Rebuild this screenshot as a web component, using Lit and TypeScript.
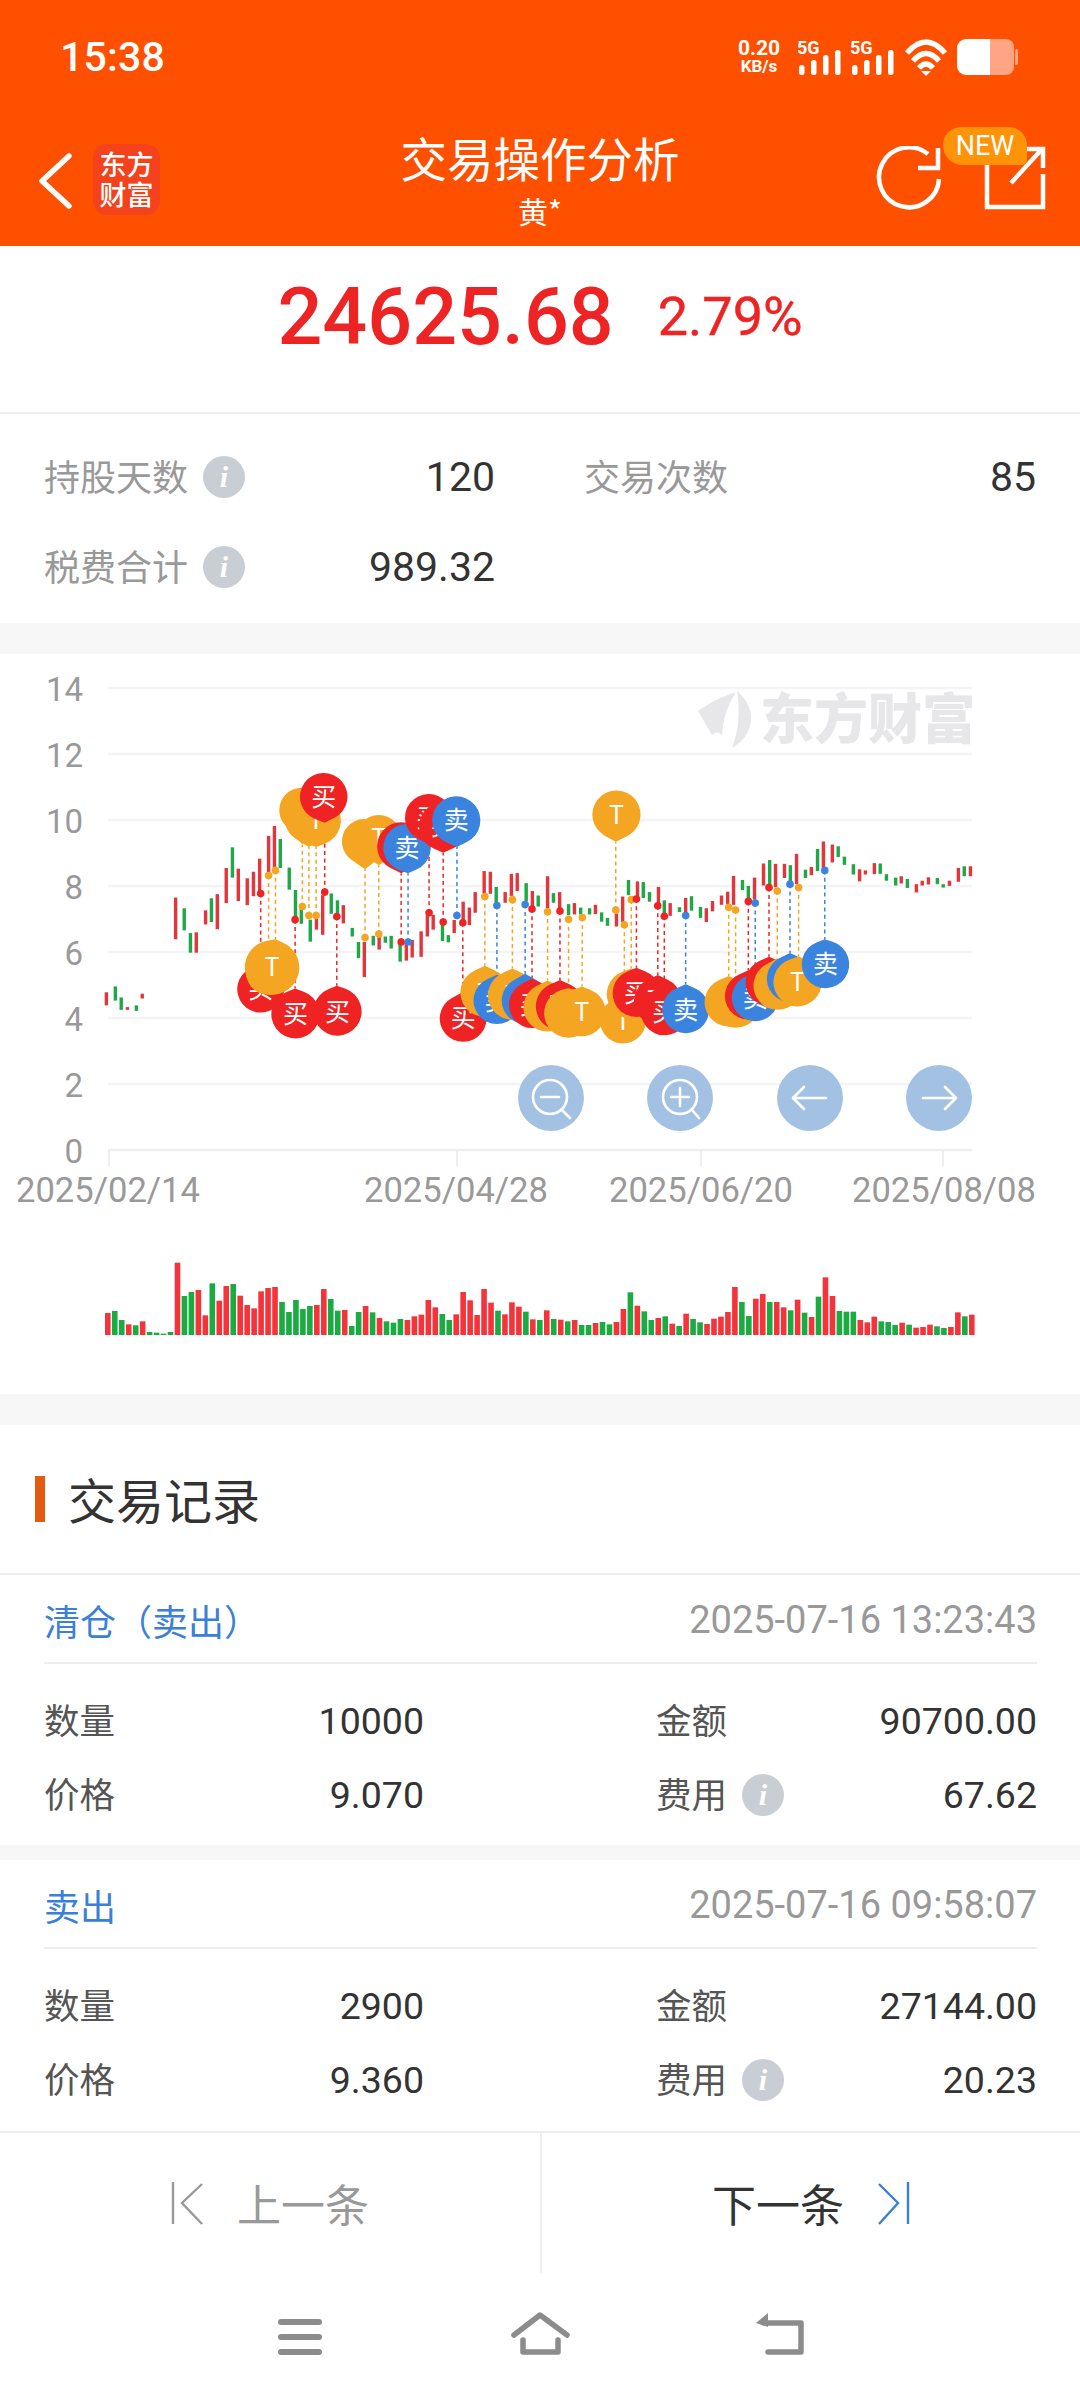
import { LitElement, html, css, svg } from "lit";
import { customElement } from "lit/decorators.js";

const SX = 2.904;
const lx = (z: number) => z / SX;
const rx = (z: number) => 540 + z / SX;
const zy = (z: number) => 650 + z / SX;

const leftC = "r 309 994 1032,g 335 977 1018,g 352 1009 1045,r 370 1037 1045,g 396 1032 1048,r 413 998 1012,r 510 719 840,g 535 750 814,g 553 822 879,r 570 820 879,r 597 756 797,g 614 721 790,r 631 709 811,r 657 633 735,g 675 573 661,r 692 635 729,r 718 663 741,r 736 644 715,r 754 606 707,r 780 540 645,r 797 511 633,g 814 549 633,g 840 632 696,g 858 697 783,g 875 745 795,g 901 783 847,r 919 770 812,r 937 712 827,g 962 707 766,g 980 727 770,r 997 741 794,g 1023 807 832,g 1041 848 895,r 1058 848 950,g 1084 830 858,r 1101 830 870,g 1119 832 850,g 1136 830 867,g 1162 855 905,r 1180 850 902,r 1197 842 893,r 1223 817 891,r 1241 770 832,r 1258 769 812,g 1285 795 845,g 1302 828 849,r 1319 784 822,r 1345 731 790,r 1363 748 799,r 1380 703 763,r 1406 642 707,r 1424 644 708,g 1441 688 732,r 1467 703 734,r 1485 650 714,r 1502 648 700,g 1528 677 730,r 1546 700 745,g 1563 713 745";
const rightC = "r 22 657 750,g 39 706 734,r 57 703 750,g 83 738 770,r 100 735 768,g 118 748 768,g 144 750 768,r 161 740 767,g 179 762 789,g 196 778 801,r 222 765 803,r 240 716 790,g 257 668 712,r 283 672 715,g 300 674 720,g 318 703 731,r 344 688 735,g 361 727 765,r 378 735 772,g 405 747 761,r 423 720 762,g 440 715 757,g 466 746 778,r 483 750 790,r 501 729 759,r 527 713 740,r 545 702 738,r 562 656 740,g 588 668 697,g 605 685 725,r 623 661 725,r 649 620 684,g 667 610 682,r 684 621 689,r 710 621 662,g 727 625 672,r 745 592 680,g 771 638 662,r 788 630 654,g 806 578 642,r 823 556 632,r 849 565 617,g 866 570 601,g 884 600 624,g 910 622 652,r 928 637 672,r 945 640 652,r 971 619 651,g 988 620 650,g 1006 651 670,g 1033 661 684,r 1049 657 678,g 1067 665 691,r 1093 680 704,r 1110 670 684,r 1128 660 681,g 1154 662 680,g 1171 680 690,r 1189 670 685,r 1215 633 673,g 1232 628 657,r 1250 628 657";

type Candle = { x: number; y1: number; y2: number; c: string };
const parse = (s: string, f: (n: number) => number): Candle[] =>
  s.split(",").map((p) => {
    const [c, x, a, b] = p.split(" ");
    return { c, x: f(+x), y1: zy(+a), y2: zy(+b) };
  });
const candles = [...parse(leftC, lx), ...parse(rightC, rx)];

const vols = "r339 g333 g360 r373 g376 r364 g396 g398 g401 g396 r188 g288 g276 r270 r346 g250 r302 r258 g252 r287 r315 r325 r274 r264 r261 g306 g336 g300 g327 g318 r315 r267 g297 g332 r330 g378 g336 r318 g337 r354 g364 g368 g357 r360 r349 r344 r300 r322 g342 g360 r343 r276 r301 r345 r267 r308 g332 r343 r307 r320 g335 r358 g360 r331 g357 r359 g364 r360 g375 g375 r369 g366 g373 r366 r327 g277 r317 g334 g360 r354 g349 r371 g378 r341 g357 g367 r372 r356 r350 r336 r261 g306 g348 r296 r282 g306 r306 r322 g331 r299 g338 r351 g290 r232 r288 g333 g335 g335 r360 r367 r350 g364 g366 g375 r368 g374 r383 r381 r374 g379 g384 r381 r337 g349 r344"
  .split(" ")
  .map((s) => ({ c: s[0], h: (405 - +s.slice(1)) / 3 }));

const pinsL: [string, number, number, number, number, number, number, number][] = [
  ["买", 757, 985, 68, 757, 908, 757, 707],
  ["T", 780, 935, 66, 780, 860, 780, 655],
  ["T", 790, 922, 79, 800, 840, 800, 640],
  ["买", 858, 1058, 70, 857, 983, 857, 783],
  ["T", 876, 465, 65, 878, 565, 878, 745],
  ["T", 897, 490, 70, 897, 572, 897, 771],
  ["T", 918, 495, 72, 918, 572, 918, 771],
  ["买", 940, 426, 69, 943, 502, 943, 703],
  ["买", 980, 1050, 70, 978, 975, 978, 774],
  ["T", 1058, 556, 65, 1060, 637, 1060, 835],
  ["T", 1100, 545, 66, 1100, 625, 1100, 825],
  ["买", 1165, 570, 70, 1165, 648, 1165, 848],
  ["卖", 1182, 574, 69, 1185, 648, 1185, 848],
  ["买", 1245, 487, 69, 1246, 564, 1246, 763],
  ["买", 1287, 512, 70, 1287, 589, 1287, 790],
  ["卖", 1325, 495, 70, 1327, 572, 1327, 771],
  ["买", 1345, 1070, 68, 1344, 993, 1344, 792],
  ["T", 1408, 995, 71, 1408, 917, 1408, 716],
  ["卖", 1443, 1018, 68, 1443, 943, 1443, 742],
  ["T", 1488, 1003, 71, 1488, 925, 1488, 725],
  ["卖", 1525, 1018, 68, 1525, 940, 1525, 739],
  ["买", 1546, 1030, 68, 1545, 955, 1545, 752],
];
const pinsR: [string, number, number, number, number, number, number, number][] = [
  ["T", 22, 1038, 70, 22, 960, 22, 760],
  ["买", 58, 1035, 70, 58, 958, 58, 758],
  ["T", 83, 1055, 71, 83, 982, 83, 782],
  ["T", 121, 1052, 70, 122, 977, 123, 777],
  ["T", 222, 478, 70, 220, 557, 220, 755],
  ["T", 241, 1076, 67, 245, 1000, 245, 798],
  ["T", 265, 1000, 71, 265, 925, 265, 725],
  ["买", 280, 997, 69, 280, 923, 280, 723],
  ["买", 342, 1020, 69, 342, 944, 342, 743],
  ["买", 362, 1050, 69, 361, 973, 361, 773],
  ["卖", 423, 1045, 68, 423, 971, 423, 771],
  ["T", 548, 1023, 70, 548, 947, 548, 747],
  ["T", 568, 1025, 72, 568, 952, 568, 755],
  ["买", 605, 1005, 68, 605, 930, 605, 730],
  ["卖", 625, 1010, 68, 625, 935, 625, 735],
  ["买", 665, 965, 68, 665, 891, 665, 690],
  ["T", 690, 975, 70, 689, 895, 689, 700],
  ["卖", 727, 955, 68, 726, 880, 726, 680],
  ["T", 748, 965, 70, 751, 890, 751, 690],
  ["卖", 829, 913, 69, 827, 840, 827, 640],
];

const colors: Record<string, string> = { 买: "#ef2323", 卖: "#3a84e0", T: "#f4a622" };

const balloonPath = (cx: number, cy: number, r: number, tx: number, ty: number) => {
  const dx = tx - cx;
  const dy = ty - cy;
  const d = Math.max(Math.hypot(dx, dy), r + 1);
  const base = Math.atan2(dy, dx);
  const t = Math.acos(r / d);
  const a1 = base - t;
  const a2 = base + t;
  const x1 = cx + r * Math.cos(a1);
  const y1 = cy + r * Math.sin(a1);
  const x2 = cx + r * Math.cos(a2);
  const y2 = cy + r * Math.sin(a2);
  return `M${tx} ${ty}L${x1} ${y1}A${r} ${r} 0 1 0 ${x2} ${y2}Z`;
};

const allPins = [
  ...pinsL.map((p) => ({ p, f: lx })),
  ...pinsR.map((p) => ({ p, f: rx })),
];

const gridYs = [688, 754, 820, 886, 952, 1018, 1084];
const yLabels = [
  ["14", 688], ["12", 754], ["10", 820], ["8", 886], ["6", 952],
  ["4", 1018], ["2", 1084], ["0", 1150],
] as [string, number][];

const chart = () => html`
  <svg class="chart" width="1080" height="740" viewBox="0 654 1080 740">
    <text class="wm" x="760" y="739">东方财富</text>
    <rect x="972" y="680" width="30" height="75" fill="#fff"></rect>
    <path d="M698 711Q716 698 736 692Q723 712 722 735Q717 730 712 735Z" fill="#e7e7ea"></path>
    <path d="M737 691Q752 704 751 720Q750 737 732 748Q742 722 737 691Z" fill="#e7e7ea"></path>
    ${gridYs.map((y) => svg`<line x1="108" x2="972" y1=${y} y2=${y} stroke="#f4f4f4" stroke-width="2.4"></line>`)}
    <line x1="108" x2="972" y1="1150" y2="1150" stroke="#eeeeee" stroke-width="2.4"></line>
    ${[109, 457, 701, 943].map((x) => svg`<line x1=${x} x2=${x} y1="1150" y2="1166" stroke="#eeeeee" stroke-width="2"></line>`)}
    ${yLabels.map(([t, y]) => svg`<text class="axis" x="83" y=${y + 13} text-anchor="end">${t}</text>`)}
    ${[["2025/02/14", 108], ["2025/04/28", 456], ["2025/06/20", 701], ["2025/08/08", 944]].map(
      ([t, x]) => svg`<text class="axis date" x=${x} y="1202" text-anchor="middle">${t}</text>`
    )}
    ${candles.map(
      (c) => svg`<rect x=${c.x - 1.7} y=${c.y1} width="3.4" height=${c.y2 - c.y1} fill=${c.c === "r" ? "#e2353c" : "#1ea847"}></rect>`
    )}
    ${allPins.map(({ p, f }) => svg`<line x1=${f(p[6])} x2=${f(p[4])} y1=${zy(p[7])} y2=${zy(p[5])} stroke=${colors[p[0]]} stroke-width="1.5" stroke-dasharray="4 3.4"></line>`)}
    ${allPins.map(({ p, f }) => {
      const [t, cx, cy, r, tx, ty, dx, dy] = p;
      const col = colors[t];
      return svg`
        <path d=${balloonPath(f(cx), zy(cy), r / SX, f(tx), zy(ty))} fill=${col}></path>
        <text class="pin" x=${f(cx)} y=${zy(cy) + 9} text-anchor="middle">${t}</text>
        <circle cx=${f(dx)} cy=${zy(dy)} r="3.8" fill=${col}></circle>`;
    })}
    ${[551, 680, 810, 939].map((x) => svg`<circle cx=${x} cy="1098" r="33" fill="#a3c2e3"></circle>`)}
    <g fill="none" stroke="#fff" stroke-width="2.6" stroke-linecap="round" stroke-linejoin="round">
      <circle cx="550" cy="1097" r="17"></circle>
      <path d="M541 1097H559M562 1110L570 1118"></path>
      <circle cx="680" cy="1097" r="17"></circle>
      <path d="M671 1097H689M680 1088V1106M692 1110L699 1118"></path>
      <path d="M794 1098H826M804 1087L793 1098L804 1109"></path>
      <path d="M923 1098H955M945 1087L956 1098L945 1109"></path>
    </g>
    ${vols.map((v, i) => {
      const x = 105 + (i * (975 - 105 - 6)) / (vols.length - 1);
      return svg`<rect x=${x} y=${1335 - v.h} width="5.6" height=${v.h} fill=${v.c === "r" ? "#f5333b" : "#1aab43"}></rect>`;
    })}
  </svg>
`;

const info = () => html`<span class="info">i</span>`;

const cell = (label: string, value: string, withInfo = false) => html`
  <div class="cell">
    <span class="lab"><span class="lt">${label}</span>${withInfo ? info() : ""}</span>
    <span class="val">${value}</span>
  </div>
`;

const record = (title: string, date: string, rows: string[]) => html`
  <section class="rec">
    <div class="rec-head"><span class="rec-title">${title}</span><span class="rec-date">${date}</span></div>
    <div class="rec-grid">
      ${cell("数量", rows[0])}
      ${cell("金额", rows[1])}
      ${cell("价格", rows[2])}
      ${cell("费用", rows[3], true)}
    </div>
  </section>
`;

@customElement("app-root")
export class AppRoot extends LitElement {
  static styles = css`
    :host {
      display: block;
      width: 1080px;
      height: 2400px;
      overflow: hidden;
      background: #fff;
      font-family: Roboto, "Noto Sans CJK SC", sans-serif;
      color: #333;
    }
    svg { display: block; }
    .top { background: #ff5000; height: 246px; color: #fff; display: flex; flex-direction: column; }
    .status { height: 112px; display: flex; align-items: center; padding: 2px 62px 0 60px; box-sizing: border-box; justify-content: space-between; }
    .time { font-size: 41px; font-weight: 500; letter-spacing: 0.2px; }
    .sicons { display: flex; align-items: center; }
    .speed { display: flex; flex-direction: column; align-items: center; width: 46px; margin-right: 16px; font-weight: 700; line-height: 18px; }
    .speed b { font-size: 21px; font-weight: 700; }
    .speed i { font-size: 17px; font-style: normal; }
    .nav { height: 134px; display: grid; grid-template-columns: 1fr 300px 1fr; }
    .nav-left { display: flex; align-items: center; padding-left: 36px; gap: 19px; }
    .logo { width: 67px; height: 71px; background: #f4431c; border-radius: 14px; display: flex; flex-direction: column; align-items: center; justify-content: center; font-size: 27px; font-weight: 500; line-height: 30px; font-family: "Noto Sans CJK SC", sans-serif; }
    .ttl { display: flex; flex-direction: column; align-items: center; padding-top: 15px; font-family: "Noto Sans CJK SC", sans-serif; }
    .ttl b { font-size: 46.5px; font-weight: 400; line-height: 60px; white-space: nowrap; }
    .ttl span { font-size: 30px; line-height: 36px; margin-top: 5px; }
    .nav-right { display: flex; justify-content: flex-end; align-items: center; padding-right: 34px; gap: 42px; position: relative; }
    .new { position: absolute; right: 53px; top: 15px; width: 84px; height: 38px; background: #ff9408; border-radius: 20px 20px 6px 22px; display: flex; align-items: center; justify-content: center; font-size: 27px; color: #fff; }
    .hero { height: 168px; border-bottom: 2px solid #eeeeee; display: flex; justify-content: center; align-items: center; gap: 44px; padding-bottom: 24px; box-sizing: border-box; color: #ee2424; }
    .hero b { font-size: 79px; font-weight: 500; line-height: 100px; }
    .hero span { font-size: 54px; font-weight: 400; line-height: 100px; -webkit-text-stroke: 0.4px #ee2424; }
    .stats { height: 209px; box-sizing: border-box; padding: 18px 44px 0; display: grid; grid-template-columns: 451px 452px; column-gap: 89px; grid-auto-rows: 90px; }
    .cell { display: flex; align-items: center; justify-content: space-between; }
    .lab { display: flex; align-items: center; gap: 15px; font-size: 36px; color: #999; font-family: "Noto Sans CJK SC", sans-serif; }
    .lt { padding-bottom: 5px; }
    .val { font-size: 41px; color: #333; }
    .info { width: 42px; height: 42px; border-radius: 50%; background: #c9ced4; color: #fff; display: flex; align-items: center; justify-content: center; font: italic 700 30px "Liberation Serif", serif; }
    .band { height: 31px; background: #f7f7f7; }
    .chart-wrap { height: 740px; }
    .chart .axis { font-family: Roboto, sans-serif; font-size: 33px; fill: #999; }
    .chart .date { font-size: 34.6px; }
    .chart .pin { font-family: "Noto Sans CJK SC", Roboto, sans-serif; font-size: 25px; fill: #fff; }
    .chart .wm { font-family: "Noto Sans CJK SC", sans-serif; font-size: 54px; font-weight: 900; fill: #e7e7ea; }
    .sec-title { height: 150px; box-sizing: border-box; border-bottom: 2px solid #eeeeee; display: flex; align-items: center; gap: 23px; padding: 0 0 0 35px; font-size: 48px; color: #333; font-family: "Noto Sans CJK SC", sans-serif; }
    .sec-title span { padding-bottom: 3px; }
    .sec-title i { display: block; width: 10px; height: 46px; background: #e55a11; }
    .rec { padding: 0 43px 0 44px; }
    .rec + .rec { border-top: 15px solid #f7f7f7; }
    .rec-head { height: 89px; box-sizing: border-box; border-bottom: 2px solid #eeeeee; display: flex; align-items: center; justify-content: space-between; padding-top: 2px; }
    .rec-title { font-size: 36px; color: #3a80d8; font-family: "Noto Sans CJK SC", sans-serif; }
    .rec-date { font-size: 38px; color: #999; }
    .rec-grid { display: grid; grid-template-columns: 380px 381px; column-gap: 232px; grid-auto-rows: 74px; padding: 20px 0 13px; }
    .rec .val { font-size: 37.5px; }
    .rec .lab { font-size: 35.5px; color: #555; }
    .foot { margin-top: 1px; border-top: 2px solid #eeeeee; display: grid; grid-template-columns: 540px 1fr; height: 140px; font-family: "Noto Sans CJK SC", sans-serif; }
    .foot div { display: flex; align-items: center; justify-content: center; gap: 34px; font-size: 44px; }
    .prev { color: #999; }
    .next { color: #333; border-left: 2px solid #eeeeee; }
    .sys { height: 127px; box-sizing: border-box; padding: 37px 180px 0; display: grid; grid-template-columns: repeat(3, 240px); justify-items: center; align-items: start; }
  `;

  render() {
    return html`
      <header class="top">
        <div class="status">
          <span class="time">15:38</span>
          <div class="sicons">
            <div class="speed"><b>0.20</b><i>KB/s</i></div>
            <svg width="220" height="40" viewBox="798 37 220 40" fill="#fff">
              <text x="797" y="54" font-family="Roboto" font-weight="700" font-size="18">5G</text>
              <text x="850" y="54" font-family="Roboto" font-weight="700" font-size="18">5G</text>
              ${[799, 852].map((o) => [0, 12, 24, 36].map((d, i) => svg`<rect x=${o + d} y=${65 - i * 5} width="5.5" height=${10 + i * 5} rx="2.5"></rect>`))}
              <g fill="none" stroke="#fff" stroke-width="5.5">
                <path d="M907 53Q926 31 945 53"></path>
                <path d="M913 61Q926 46 939 61"></path>
                <path d="M919 68Q926 60 933 68"></path>
              </g>
              <path d="M921 71H931L926 76Z"></path>
              <path d="M966 39H990V75H966A9 9 0 0 1 957 66V48A9 9 0 0 1 966 39Z"></path>
              <path d="M990 39H1006A8 8 0 0 1 1014 47V67A8 8 0 0 1 1006 75H990Z" fill="#ffa583"></path>
              <rect x="1015" y="49" width="3" height="16" rx="1.5" fill="#ffa583"></rect>
            </svg>
          </div>
        </div>
        <div class="nav">
          <div class="nav-left">
            <svg width="38" height="60" viewBox="36 150 38 60" fill="none" stroke="#fff" stroke-width="5.5" stroke-linecap="round" stroke-linejoin="round"><path d="M69 157L42 182L69 207"></path></svg>
            <div class="logo"><span>东方</span><span>财富</span></div>
          </div>
          <div class="ttl"><b>交易操作分析</b><span>黄*</span></div>
          <div class="nav-right">
            <svg width="66" height="66" viewBox="876 148 66 66" fill="none" stroke="#fff" stroke-width="4.5">
              <path d="M928 156A30 30 0 1 0 939 181"></path>
              <path d="M938 150V170H918"></path>
            </svg>
            <svg width="62" height="66" viewBox="984 148 62 66" fill="none" stroke="#fff" stroke-width="4.5">
              <path d="M1000 162H987V209H1043V176"></path>
              <path d="M1011 185L1042 151M1025 151H1043V170"></path>
            </svg>
            <span class="new">NEW</span>
          </div>
        </div>
      </header>

      <section class="hero"><b>24625.68</b><span>2.79%</span></section>

      <section class="stats">
        ${cell("持股天数", "120", true)}
        ${cell("交易次数", "85")}
        ${cell("税费合计", "989.32", true)}
      </section>
      <div class="band"></div>

      <section class="chart-wrap">${chart()}</section>
      <div class="band"></div>

      <div class="sec-title"><i></i><span>交易记录</span></div>
      ${record("清仓（卖出）", "2025-07-16 13:23:43", ["10000", "90700.00", "9.070", "67.62"])}
      ${record("卖出", "2025-07-16 09:58:07", ["2900", "27144.00", "9.360", "20.23"])}

      <footer class="foot">
        <div class="prev">
          <svg width="32" height="44" viewBox="170 2181 32 44" fill="none" stroke="#999" stroke-width="2.4"><path d="M172 2182V2224M201 2184L181 2203L201 2224"></path></svg>
          <span>上一条</span>
        </div>
        <div class="next">
          <span>下一条</span>
          <svg width="32" height="44" viewBox="879 2181 32 44" fill="none" stroke="#3a80d8" stroke-width="2.4"><path d="M909 2182V2224M880 2184L899 2203L880 2224"></path></svg>
        </div>
      </footer>
      <nav class="sys">
        <svg width="60" height="50" viewBox="270 2310 60 50" fill="#8c8c8c">
          <rect x="278" y="2319" width="44" height="6" rx="3"></rect>
          <rect x="278" y="2334" width="44" height="6" rx="3"></rect>
          <rect x="278" y="2349" width="44" height="6" rx="3"></rect>
        </svg>
        <svg width="60" height="50" viewBox="510 2310 60 50" fill="none" stroke="#8c8c8c" stroke-width="5.5" stroke-linecap="round" stroke-linejoin="round">
          <path d="M514 2335L540 2315L567 2335"></path>
          <path d="M523 2340V2352H558V2340"></path>
        </svg>
        <svg width="60" height="50" viewBox="750 2310 60 50" fill="none" stroke="#8c8c8c" stroke-width="5.5" stroke-linecap="round" stroke-linejoin="round">
          <path d="M764 2323H801V2352H768"></path>
          <path d="M756 2323L768 2313V2327Z" fill="#8c8c8c" stroke="none"></path>
        </svg>
      </nav>
    `;
  }
}
